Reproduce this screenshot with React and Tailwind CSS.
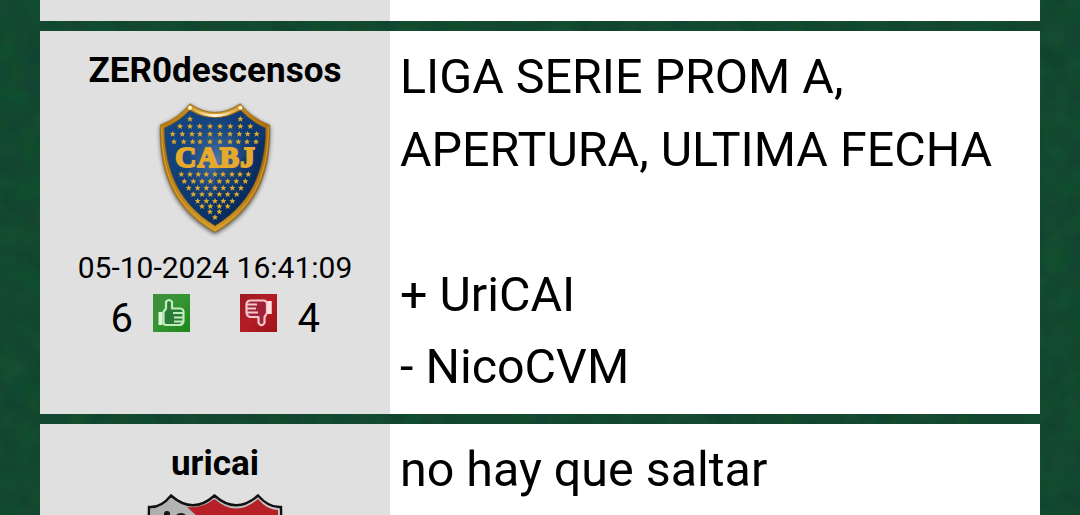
const STARS = [
  [72, [120, 271]],
  [94, [90, 120, 149, 180, 210, 241, 271, 301]],
  [117, [68, 97, 126, 150, 180, 210, 240, 268, 293, 320]],
  [140, [72, 101, 128, 150, 180, 210, 240, 265, 291, 318]],
  [238, [94, 120, 145, 169, 195, 219, 246, 270, 295]],
  [259, [103, 130, 156, 181, 208, 233, 259, 286]],
  [279, [116, 143, 169, 195, 220, 247, 273]],
  [298, [130, 156, 181, 208, 233, 260]],
  [318, [143, 169, 195, 220, 247]],
  [334, [156, 181, 208, 233]],
  [350, [180, 208]],
  [367, [195]],
];

const STAR = "M0,-9 2.8,-3 9,-2.8 4,1.8 6,8 0,4.6 -6,8 -4,1.8 -9,-2.8 -2.8,-3Z";

function BocaShield() {
  return (
    <svg viewBox="0 0 390 435" className="block h-[145px] w-[130px]">
      <defs>
        <linearGradient id="blue" x1="0" y1="0" x2="1" y2="1">
          <stop offset="0" stopColor="#174a87" />
          <stop offset="0.5" stopColor="#0e3971" />
          <stop offset="1" stopColor="#062957" />
        </linearGradient>
        <linearGradient id="gold" x1="0" y1="0" x2="1" y2="0">
          <stop offset="0" stopColor="#b47b12" />
          <stop offset="0.5" stopColor="#d09726" />
          <stop offset="1" stopColor="#a96f10" />
        </linearGradient>
        <radialGradient id="glow" cx="0.52" cy="0.43" r="0.4">
          <stop offset="0" stopColor="#7197c4" stopOpacity="0.65" />
          <stop offset="1" stopColor="#3b659b" stopOpacity="0" />
        </radialGradient>
        <linearGradient id="shine" x1="0" y1="0" x2="1" y2="0">
          <stop offset="0" stopColor="#d89e28" />
          <stop offset="0.5" stopColor="#fffbe5" />
          <stop offset="1" stopColor="#d89e28" />
        </linearGradient>
        <filter id="soft" x="-10%" y="-10%" width="120%" height="120%">
          <feGaussianBlur stdDeviation="6" />
        </filter>
      </defs>
      <path d="M120 31Q195 82 270 31Q305 74 359 94C362 222 330 342 195 418C60 342 28 222 31 94Q85 74 120 31Z" fill="#222" opacity="0.75" filter="url(#soft)" />
      <path d="M120 26Q195 78 271 26Q306 70 359 90C362 215 332 334 195 412C58 334 28 215 31 90Q85 70 120 26Z" fill="url(#gold)" stroke="#8b6013" strokeWidth="2" />
      <path d="M35 94C35 215 64 328 195 405C326 328 355 215 355 94" fill="none" stroke="#e5b54c" strokeWidth="2" />
      <path d="M119 46Q195 91 272 46Q306 82 347 99C346 208 315 320 195 392C75 320 44 208 43 99Q84 82 119 46Z" fill="url(#blue)" stroke="#705323" strokeWidth="2" />
      <path d="M119 46Q195 91 272 46Q306 82 347 99C346 208 315 320 195 392C75 320 44 208 43 99Q84 82 119 46Z" fill="url(#glow)" />
      <path d="M195 225V392C315 320 346 208 347 120Q300 200 195 225Z" fill="#02204c" opacity="0.25" />
      <path d="M122 38Q195 86 269 38" fill="none" stroke="url(#shine)" strokeWidth="8" />
      <circle cx="120" cy="38" r="6" fill="#fff5d8" />
      <circle cx="271" cy="38" r="6" fill="#fff5d8" />
      <g fill="#dba92f">
        {STARS.map(([y, xs]) =>
          xs.map((x) => <path key={`${x}-${y}`} d={STAR} transform={`translate(${x} ${y})`} />)
        )}
      </g>
      <text x="76" y="217" textLength="238" lengthAdjust="spacing" fontSize="87" fill="#e5aa2d" stroke="#e5aa2d" strokeWidth="6" className="font-['Liberation_Serif',serif] font-bold">
        CABJ
      </text>
    </svg>
  );
}

function RedShield() {
  return (
    <svg viewBox="0 0 170 160" className="block h-[160px] w-[170px] shrink-0">
      <defs>
        <linearGradient id="silver" x1="0" y1="0" x2="1" y2="0">
          <stop offset="0" stopColor="#aaa" />
          <stop offset="1" stopColor="#ccc" />
        </linearGradient>
        <clipPath id="crest">
          <path d="M19 22Q31 23 41 10.5Q63 30 84.5 10.5Q106 30 128 10.5Q139 23 151 22C153 80 133 124 85 150C37 124 17 80 19 22Z" />
        </clipPath>
      </defs>
      <g clipPath="url(#crest)">
        <rect width="170" height="160" fill="url(#silver)" />
        <path d="M57 22Q71 24 84.5 14Q106 33 128 14Q137 25 148 25V105Z" fill="#b52127" />
        <circle cx="37" cy="29" r="3" fill="#171717" />
        <circle cx="51" cy="35" r="5.5" fill="none" stroke="#171717" strokeWidth="3" />
      </g>
      <path d="M19 22Q31 23 41 10.5Q63 30 84.5 10.5Q106 30 128 10.5Q139 23 151 22C153 80 133 124 85 150C37 124 17 80 19 22Z" fill="none" stroke="#111" strokeWidth="2.4" />
    </svg>
  );
}

function ThumbUp() {
  return (
    <svg viewBox="0 0 37 38" className="h-[38px] w-[37px]">
      <defs>
        <linearGradient id="green" x1="0" y1="0" x2="1" y2="1">
          <stop offset="0" stopColor="#3f8f3f" />
          <stop offset="0.5" stopColor="#359432" />
          <stop offset="1" stopColor="#1d8718" />
        </linearGradient>
        <filter id="smooth">
          <feGaussianBlur stdDeviation="0.75" />
        </filter>
      </defs>
      <rect width="37" height="38" fill="url(#green)" />
      <g filter="url(#smooth)" stroke="#c0ecba">
        <path d="M10.5 18L13 14.5V8Q16 4 19 8V14.5H27Q31 14.5 30.5 19V27Q30 31 26 31H13Q10.5 31 10.5 28Z" fill="#2c7a37" strokeWidth="2.2" strokeLinejoin="round" />
        <path d="M20 19H30M21 23.5H30M21 27.5H30" strokeWidth="1.8" />
        <path d="M7.5 18V31" stroke="#dcf5d8" strokeWidth="4" />
      </g>
    </svg>
  );
}

function ThumbDown() {
  return (
    <svg viewBox="0 0 37 38" className="h-[38px] w-[37px]">
      <defs>
        <linearGradient id="red" x1="0" y1="0" x2="1" y2="1">
          <stop offset="0" stopColor="#9d1c20" />
          <stop offset="0.5" stopColor="#b41d26" />
          <stop offset="1" stopColor="#9e1218" />
        </linearGradient>
      </defs>
      <rect width="37" height="38" fill="url(#red)" />
      <g filter="url(#smooth)" stroke="#f5c9cc">
        <path d="M27 19L24.5 23V29Q21.5 33.5 18.5 29V23H10Q6.5 22 6.5 18V10Q7 6.5 11 6.5H24Q27 7 27 10Z" fill="#9f2437" strokeWidth="2.2" strokeLinejoin="round" />
        <path d="M7 10.5H17M7 14.5H16M7 18.5H18" strokeWidth="1.8" />
        <path d="M29.5 7V20" stroke="#ffdfe0" strokeWidth="4.5" />
      </g>
    </svg>
  );
}

function Post({ author, className, children, message }) {
  return (
    <article className={`flex w-[1000px] shrink-0 bg-white ${className}`}>
      <aside className="flex w-[350px] shrink-0 flex-col items-center bg-[#e0e0e0]">
        {author}
        {children}
      </aside>
      <div className="min-w-0 flex-1 whitespace-pre-line p-[10px] text-[48.4px] leading-[72.6px]">{message}</div>
    </article>
  );
}

const name = "mt-[13px] h-[53px] text-[35.1px] leading-[53px] font-bold";

export default function App() {
  return (
    <main className="relative flex h-[515px] w-[1080px] flex-col items-center gap-[10px] overflow-hidden bg-[#124a30] font-[Roboto,sans-serif] text-black">
      <svg className="absolute inset-0 h-full w-full" aria-hidden="true">
        <filter id="grain" x="0" y="0" width="100%" height="100%" colorInterpolationFilters="sRGB">
          <feTurbulence type="fractalNoise" baseFrequency="0.045" numOctaves="3" seed="4" />
          <feColorMatrix values="0.05 0 0 0 0.045  0 0.07 0 0 0.25  0 0 0.05 0 0.16  0 0 0 0 1" />
        </filter>
        <rect width="100%" height="100%" filter="url(#grain)" />
      </svg>
      <Post className="relative h-[21px]" />
      <Post
        className="relative h-[383px]"
        author={<h2 className={name}>ZER0descensos</h2>}
        message={"LIGA SERIE PROM A,\nAPERTURA, ULTIMA FECHA\n\n+ UriCAI\n- NicoCVM"}
      >
        <div className="-mt-[2px]"><BocaShield /></div>
        <time className="mt-[6px] text-[30px] leading-[44px]">05-10-2024 16:41:09</time>
        <div className="mt-[3px] flex w-[210px] items-center text-[40px] leading-[52px]">
          <span className="w-[43px] pl-[0.5px]">6</span>
          <span className="mb-[12px]"><ThumbUp /></span>
          <span className="mb-[12px] ml-[50px]"><ThumbDown /></span>
          <span className="ml-auto">4</span>
        </div>
      </Post>
      <Post
        className="relative h-[91px] overflow-hidden"
        author={<h2 className={name}>uricai</h2>}
        message="no hay que saltar"
      >
        <div className="-mt-[5px]"><RedShield /></div>
      </Post>
    </main>
  );
}
